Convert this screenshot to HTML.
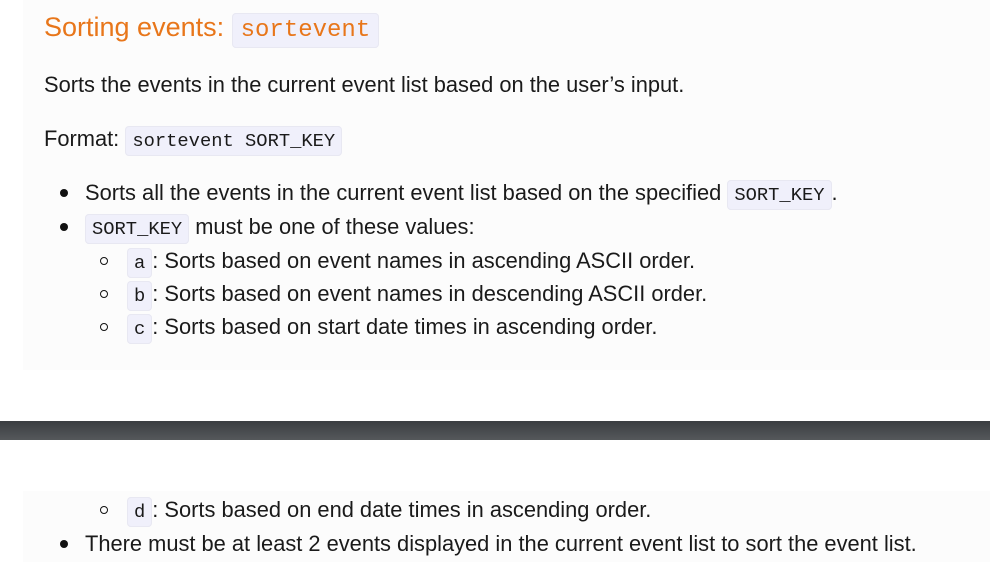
<!DOCTYPE html>
<html><head><style>
body{margin:0;width:990px;height:562px;background:#fff;position:relative;overflow:hidden;font-family:"Liberation Sans",sans-serif;color:#1a1a1a}
.panel{position:absolute;left:23px;right:0;background:#fcfcfc}
.l{position:absolute;white-space:nowrap;font-size:21.85px;line-height:24px}
code{font-family:"Liberation Mono",monospace;background:#f0f0fb;border:1px solid #e8e8f2;border-radius:4px;padding:3px 6px;font-size:18.8px}
.dot{position:absolute;width:8px;height:8px;border-radius:50%;background:#111}
.circ{position:absolute;width:6px;height:6px;border-radius:50%;border:1.5px solid #111}
</style></head><body>
<div class="panel" style="top:0;height:370px"></div>
<div style="position:absolute;left:0;right:0;top:421px;height:19px;background:linear-gradient(#3a3d41,#55585b)"></div>
<div class="panel" style="top:491px;height:71px"></div>

<div class="l" style="left:44px;top:12px;font-size:27px;line-height:30px;color:#e8761a">Sorting events: <code style="font-size:24px;color:#e8761a;padding:3px 8px">sortevent</code></div>
<div class="l" style="left:44px;top:73px">Sorts the events in the current event list based on the user’s input.</div>
<div class="l" style="left:44px;top:127px">Format: <code>sortevent SORT_KEY</code></div>

<div class="dot" style="left:60px;top:189px"></div>
<div class="l" style="left:85px;top:181px">Sorts all the events in the current event list based on the specified <code>SORT_KEY</code>.</div>
<div class="dot" style="left:60px;top:223px"></div>
<div class="l" style="left:85px;top:215px"><code>SORT_KEY</code> must be one of these values:</div>
<div class="circ" style="left:100px;top:257px"></div>
<div class="l" style="left:127px;top:249px"><code>a</code>: Sorts based on event names in ascending ASCII order.</div>
<div class="circ" style="left:100px;top:290px"></div>
<div class="l" style="left:127px;top:282px"><code>b</code>: Sorts based on event names in descending ASCII order.</div>
<div class="circ" style="left:100px;top:323px"></div>
<div class="l" style="left:127px;top:315px"><code>c</code>: Sorts based on start date times in ascending order.</div>

<div class="circ" style="left:100px;top:506px"></div>
<div class="l" style="left:127px;top:498px"><code>d</code>: Sorts based on end date times in ascending order.</div>
<div class="dot" style="left:60px;top:540px"></div>
<div class="l" style="left:85px;top:532px">There must be at least 2 events displayed in the current event list to sort the event list.</div>
</body></html>
